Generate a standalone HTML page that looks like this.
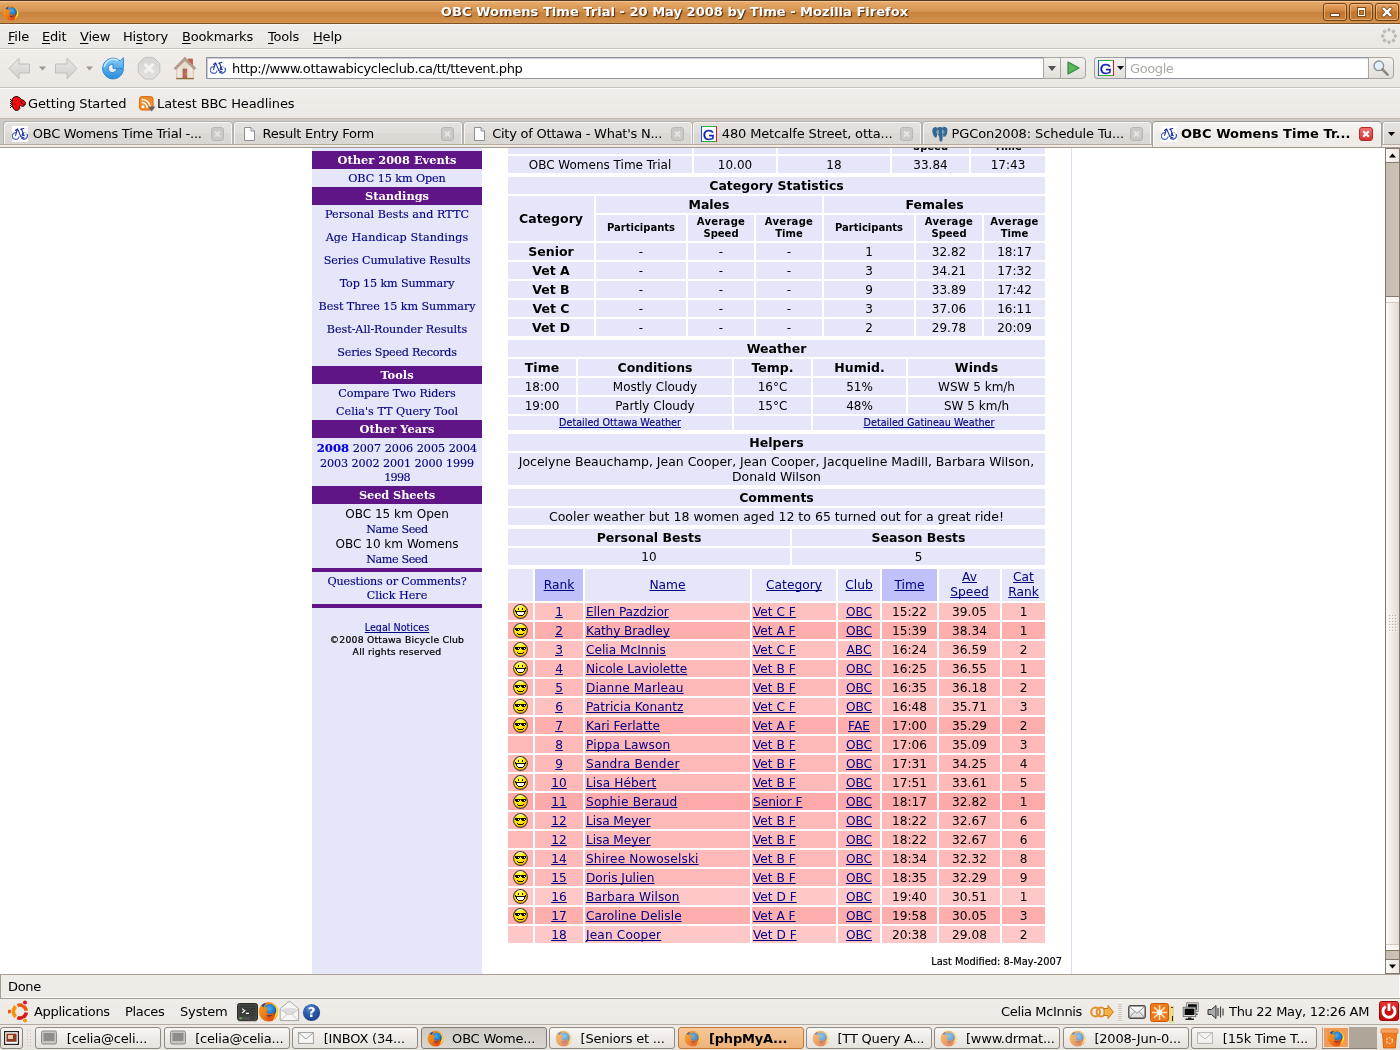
<!DOCTYPE html>
<html><head><meta charset="utf-8"><title>OBC Womens Time Trial - 20 May 2008 by Time - Mozilla Firefox</title>
<style>
*{box-sizing:border-box;margin:0;padding:0}
html,body{width:1400px;height:1050px;overflow:hidden;background:#efebe7;font-family:"DejaVu Sans","Liberation Sans",sans-serif;font-size:13px;color:#000}
.a{position:absolute;white-space:nowrap}
body>div{will-change:transform}
#titlebar{position:absolute;left:0;top:0;width:1400px;height:24px;background:linear-gradient(#4d3822 0,#4d3822 1px,#f6cc9c 1px,#f0bd88 2px,#e6aa6a 2px,#dc9c5a 7px,#d3924f 12px,#c8843e 12.5px,#cb8843 17px,#d4934f 23px,#7c5229 23px,#7c5229 24px)}
#titletext{position:absolute;left:0;top:3px;width:1349px;text-align:center;color:#fff;font-weight:bold;font-size:13.05px;line-height:17px;text-shadow:1px 1px 1px #4a280c;white-space:nowrap}
.wbtn{position:absolute;top:3px;width:24px;height:18px;border:1px solid #6e3f14;border-radius:3px;background:linear-gradient(#e9a566,#cf843d 45%,#c0742c 50%,#c97e38);box-shadow:inset 0 0 0 1px rgba(255,210,160,.55)}
#menubar{position:absolute;left:0;top:24px;width:1400px;height:25px;background:linear-gradient(#f0ede9,#ebe7e2);border-top:1px solid #f6f5f3;border-bottom:1px solid #c9c3bb}
#menubar span{position:absolute;top:4px;font-size:13px;letter-spacing:-.18px;line-height:16px;white-space:nowrap}
#menubar u{text-decoration:underline;text-underline-offset:2px;text-decoration-skip-ink:none}
#navbar{position:absolute;left:0;top:49px;width:1400px;height:39px;background:linear-gradient(#f1eeea,#ebe7e2);border-top:1px solid #fbfaf9;border-bottom:1px solid #c9c3bb}
#bmbar{position:absolute;left:0;top:88px;width:1400px;height:31px;background:linear-gradient(#f1eeea,#ece8e3);border-top:1px solid #fbfaf9;border-bottom:1px solid #c5b8a8}
#tabbar{position:absolute;left:0;top:119px;width:1400px;height:29px;background:#cdcac6;border-bottom:1px solid #a1978a}
.tab{position:absolute;top:2px;height:23px;border:1px solid #b5b1ac;border-bottom:none;border-radius:4px 4px 0 0;background:linear-gradient(#e5e2de 0,#e2dfdb 48%,#dcd8d4 52%,#dad6d2 100%);box-shadow:inset 1px 1px 0 #f6f5f3,inset -1px 0 0 #f6f5f3}
.tab .tt{position:absolute;left:27px;top:2px}
.tab .cl{position:absolute;right:8px;top:4px;width:14px;height:14px;border:1px solid #bdb8b0;border-radius:3px;background:#d6d2cc}
.tab.sel{top:2px;height:26px;background:linear-gradient(#f8f7f5,#efebe7 60%);border-color:#a5a19c;border-top-color:#9a9792;box-shadow:inset 1px 1px 0 #fdfdfc}
#content{position:absolute;left:0;top:148px;width:1385px;height:826px;background:#fff;overflow:hidden}
#vscroll{position:absolute;left:1385px;top:148px;width:15px;height:826px;background:#85796b}
#statusbar{position:absolute;left:0;top:974px;width:1400px;height:25px;background:#efebe7;border-top:1px solid #a89e92;border-left:1px solid #a89e92;border-bottom:1px solid #a59b8f;box-shadow:inset -1px -1px 0 #fbfaf9}
#panel{position:absolute;left:0;top:999px;width:1400px;height:26px;background:linear-gradient(#f0ede9,#ece8e3);border-bottom:1px solid #b5aca0}
#taskbar{position:absolute;left:0;top:1025px;width:1400px;height:25px;background:linear-gradient(#efebe7,#e6e2dc)}
/* page */
#side{position:absolute;left:312px;top:0;width:170px;height:828px;background:#e6e6fa;font-family:"DejaVu Serif","Liberation Serif",serif}
.sh{position:absolute;left:0;width:170px;height:18px;background:#5f1585;color:#fff;font-weight:bold;font-size:11.4px;line-height:18px;text-align:center;white-space:nowrap}
.sl{position:absolute;left:0;width:170px;height:18px;color:#000080;-webkit-text-stroke:.13px #000080;font-size:11.2px;line-height:18px;text-align:center;white-space:nowrap}
.ss{position:absolute;left:0;width:170px;font-family:"DejaVu Sans","Liberation Sans",sans-serif;text-align:center;white-space:nowrap}
.bar{position:absolute;left:0;width:170px;height:4px;background:#5f1585}
table.t{position:absolute;left:506px;width:541px;border-collapse:separate;border-spacing:2px;table-layout:fixed;font-size:12px}
table.t td,table.t th{background:#e6e6fa;text-align:center;vertical-align:middle;padding:0;line-height:15px;overflow:hidden;white-space:nowrap}
table.t td{padding-top:1px;line-height:16px}
table.t td.sm{padding:0;line-height:0}
table.t th{font-weight:bold;font-size:12.5px}
table.t th.h{font-weight:normal;font-size:12.25px;line-height:15px}
table.t td.w{font-size:12.45px;line-height:15px;padding-top:0;padding-bottom:1px}
table.t th.s{font-size:10px;line-height:12px}
a{color:#000080;text-decoration:underline;text-decoration-skip-ink:none}
table.r td{font-size:12.15px;height:17px}
table.r td.l{text-align:left;padding-left:1px}
</style></head><body>
<div id="titlebar"><svg class="a" style="left:3px;top:5px;opacity:1" width="16" height="16" viewBox="0 0 16 16"><circle cx="8" cy="8.2" r="7.4" fill="url(#ffo)"/><path d="M10.4 1.4Q15.6 3.6 15.4 9Q15 13 11 15Q13.2 12 13 8.4Q12.8 4.4 10.4 1.4Z" fill="url(#ffy)"/><circle cx="9" cy="7.2" r="4.9" fill="url(#ffb)"/><path d="M.8 6.4Q1.4 3.4 3.6 2.2Q3.4 3.6 4.2 4.8Q5.6 4.2 7.4 5.2L6.6 6.2L7.4 6.8Q6.2 7.6 6.6 8.8Q7.6 10.4 10.6 9.6Q12 9.2 12.4 8Q13 10.6 11 12.4Q8 14.4 4.6 13Q1 11 .8 6.4Z" fill="url(#ffo)"/><path d="M2.6 3.2Q4.4 1.6 6.4 1.6Q5 2.6 4.2 4.8Q3.2 4.2 2.6 3.2Z" fill="#1c4ea8"/><path d="M6.4 10.6Q8.6 11.6 11.2 10.2Q9.8 12 7.8 11.8Q6.8 11.4 6.4 10.6Z" fill="#0a2a78"/></svg><div id="titletext">OBC Womens Time Trial - 20 May 2008 by Time - Mozilla Firefox</div>
<div class="wbtn" style="left:1323px"><div class="a" style="left:7px;top:10px;width:8px;height:2px;background:#fff;box-shadow:0 0 0 1px #7a4a1c"></div></div>
<div class="wbtn" style="left:1349px"><div class="a" style="left:8px;top:4px;width:7px;height:8px;border:1px solid #fff;border-top-width:2px;box-shadow:0 0 0 1px #7a4a1c,inset 0 0 0 1px #9a5a20"></div></div>
<div class="wbtn" style="left:1375px"><svg class="a" style="left:5px;top:2px" width="12" height="12" viewBox="0 0 12 12"><path d="M2.6 2.6L9.4 9.4M9.4 2.6L2.6 9.4" stroke="#7a4a1c" stroke-width="4" stroke-linecap="round"/><path d="M2.6 2.6L9.4 9.4M9.4 2.6L2.6 9.4" stroke="#fff" stroke-width="2.3" stroke-linecap="round"/></svg></div>
</div>
<div id="menubar">
<span style="left:8px"><u>F</u>ile</span>
<span style="left:42px"><u>E</u>dit</span>
<span style="left:80px"><u>V</u>iew</span>
<span style="left:123px">Hi<u>s</u>tory</span>
<span style="left:182px"><u>B</u>ookmarks</span>
<span style="left:268px"><u>T</u>ools</span>
<span style="left:313px"><u>H</u>elp</span>
</div>
<svg width="0" height="0" style="position:absolute"><defs><linearGradient id="ffo" x1="0" y1="0" x2="1" y2="1"><stop offset="0" stop-color="#f6a21c"/><stop offset=".55" stop-color="#ee7a16"/><stop offset="1" stop-color="#d42a14"/></linearGradient><radialGradient id="ffb" cx="45%" cy="35%" r="65%"><stop offset="0" stop-color="#3fb2f2"/><stop offset=".6" stop-color="#2478d0"/><stop offset="1" stop-color="#123c8c"/></radialGradient><linearGradient id="ffy" x1="0" y1="0" x2="0" y2="1"><stop offset="0" stop-color="#ffc01c"/><stop offset=".5" stop-color="#ffe424"/><stop offset="1" stop-color="#f8a818"/></linearGradient></defs></svg>
<div id="navbar">
<svg class="a" style="left:8px;top:7px" width="23" height="23" viewBox="0 0 23 23"><defs><linearGradient id="ga" x1="0" y1="0" x2="0" y2="1"><stop offset="0" stop-color="#e9e7e4"/><stop offset="1" stop-color="#d2cfca"/></linearGradient></defs><path d="M1 11.5L11 1.2V7H21.5V16H11V21.8Z" fill="url(#ga)" stroke="#c2beb8" stroke-width="1" stroke-linejoin="round"/></svg>
<svg class="a" style="left:39px;top:16px" width="7" height="5" viewBox="0 0 7 5"><path d="M0 .5H7L3.5 4.5Z" fill="#9b9791"/></svg>
<svg class="a" style="left:54px;top:7px" width="24" height="23" viewBox="0 0 24 23"><path d="M23 11.5L13 1.2V7H1.5V16H13V21.8Z" fill="url(#ga)" stroke="#c2beb8" stroke-width="1" stroke-linejoin="round"/></svg>
<svg class="a" style="left:86px;top:16px" width="7" height="5" viewBox="0 0 7 5"><path d="M0 .5H7L3.5 4.5Z" fill="#9b9791"/></svg>
<svg class="a" style="left:101px;top:6px" width="24" height="24" viewBox="0 0 24 24"><defs><linearGradient id="gr" x1="0" y1="0" x2="0" y2="1"><stop offset="0" stop-color="#8fd0f5"/><stop offset=".35" stop-color="#62b6ee"/><stop offset="1" stop-color="#2b8bdb"/></linearGradient></defs><path d="M19.3 5.1A10.4 10.4 0 1 0 22.4 13.4L15.6 12.9A4.2 4.2 0 1 1 12 8.2L12 12.4H22.4V1.6Z" fill="url(#gr)" stroke="#3088d6" stroke-width="1" stroke-linejoin="round"/><path d="M3.4 10.4Q4.6 5.4 9.6 3.6Q13.4 2.6 16.4 4.2" fill="none" stroke="#d6eefc" stroke-width="1.5" stroke-linecap="round" opacity=".9"/></svg>
<svg class="a" style="left:137px;top:6px" width="24" height="24" viewBox="0 0 24 24"><defs><linearGradient id="gs" x1="0" y1="0" x2="0" y2="1"><stop offset="0" stop-color="#d6d4d0"/><stop offset="1" stop-color="#e3e1de"/></linearGradient></defs><path d="M7.6 1.4H16.4L22.8 7.8V16.6L16.4 23H7.6L1.2 16.6V7.8Z" fill="url(#gs)" stroke="#c5c2bd" stroke-width="1"/><path d="M7.6 7.8L16.4 16.6M16.4 7.8L7.6 16.6" stroke="#f3f2f0" stroke-width="3.2" stroke-linecap="butt"/></svg>
<svg class="a" style="left:173px;top:6px" width="24" height="24" viewBox="0 0 24 24"><defs><linearGradient id="gw" x1="0" y1="0" x2="1" y2="0"><stop offset="0" stop-color="#f3ebe3"/><stop offset=".5" stop-color="#e6d9cc"/><stop offset="1" stop-color="#f3ebe3"/></linearGradient></defs><rect x="15.6" y="3" width="4" height="7" fill="#c9634c" stroke="#a8503c" stroke-width=".6"/><path d="M3.8 10.5L12 3L20.2 10.5V22.4H3.8Z" fill="url(#gw)" stroke="#c7b3a0" stroke-width=".8"/><path d="M1.2 12.2L12 1.2L22.8 12.2L21.2 13.6L12 4.4L2.8 13.6Z" fill="#b89f8e" stroke="#9c8270" stroke-width=".7" stroke-linejoin="round"/><rect x="10" y="13" width="3.8" height="9.4" fill="#b96c5a" stroke="#9a5444" stroke-width=".6"/><circle cx="13.1" cy="18" r=".6" fill="#e6e020"/><path d="M3.2 22.6H20.8" stroke="#8a6a3a" stroke-width="1.3"/></svg>
<div class="a" style="left:206px;top:7px;width:838px;height:22px;background:#fff;border:1px solid #8e93a0;border-right:none;border-radius:1px 0 0 1px;box-shadow:inset 1px 1px 0 #c9ccd4"></div>
<svg class="a" style="left:210px;top:10px" width="16" height="16" viewBox="0 0 16 16"><path d="M3.4 6.6A3.4 3.4 0 1 0 7 10.8" fill="none" stroke="#4a66c0" stroke-width="1.1" stroke-linecap="round"/><path d="M9.6 12.2A3.5 3.5 0 0 0 15.4 9.2" fill="none" stroke="#2e4ab0" stroke-width="1.15" stroke-linecap="round"/><path d="M14.6 7.4A3.5 3.5 0 0 0 10.4 7" fill="none" stroke="#8aa0dc" stroke-width=".9"/><path d="M3.4 4.4L5.6 2.8M5.4 3L3.6 9.4M6 3.6L8.8 10.6L12 12M8.6 3.2L11.8 2.4M9.4 3L12.2 9.6L10 9.2L11 6.6" fill="none" stroke="#1428a4" stroke-width="1.05" stroke-linecap="round" stroke-linejoin="round"/><circle cx="15.2" cy="8.6" r=".7" fill="#0c1e9c"/></svg>
<div class="a" style="left:232px;top:11px;font-size:13px;letter-spacing:-.345px;line-height:16px">http://www.ottawabicycleclub.ca/tt/ttevent.php</div>
<div class="a" style="left:1043px;top:7px;width:18px;height:22px;background:linear-gradient(#f4f2ef,#e2dfda);border:1px solid #a9a59f"></div>
<svg class="a" style="left:1048px;top:16px" width="8" height="5" viewBox="0 0 8 5"><path d="M0 0H8L4 5Z" fill="#55524e"/></svg>
<div class="a" style="left:1060px;top:7px;width:26px;height:22px;background:linear-gradient(#f4f2ef,#e2dfda);border:1px solid #a9a59f;border-radius:0 4px 4px 0"></div>
<svg class="a" style="left:1067px;top:11px" width="13" height="14" viewBox="0 0 13 14"><path d="M1 1L12 7L1 13Z" fill="#5cb860" stroke="#2f8a3c" stroke-width="1.2" stroke-linejoin="round"/></svg>
<div class="a" style="left:1094px;top:7px;width:32px;height:22px;background:linear-gradient(#f4f2ef,#e2dfda);border:1px solid #9a9ca6;border-radius:3px 0 0 3px"></div>
<svg class="a" style="left:1098px;top:10px" width="16" height="16" viewBox="0 0 16 16"><rect x=".5" y=".5" width="15" height="15" fill="#fff"/><path d="M.5 0V16" stroke="#1a50e0"/><path d="M15.5 0V16" stroke="#e01a1a"/><path d="M1 .5H15M1 15.5H15" stroke="#2fae3a"/><text x="7.8" y="13.6" text-anchor="middle" font-family="Liberation Sans,DejaVu Sans,sans-serif" font-size="15.5" fill="#0c1eb0" stroke="#0c1eb0" stroke-width=".3">G</text></svg>
<svg class="a" style="left:1117px;top:16px" width="7" height="4" viewBox="0 0 7 4"><path d="M0 0H7L3.5 4Z" fill="#111"/></svg>
<div class="a" style="left:1125px;top:7px;width:244px;height:22px;background:#fff;border:1px solid #8e93a0;box-shadow:inset 0 1px 1px #d4d6dc"></div>
<div class="a" style="left:1130px;top:11px;font-size:13px;letter-spacing:-.4px;line-height:16px;color:#aaa9a6">Google</div>
<div class="a" style="left:1368px;top:7px;width:26px;height:22px;background:linear-gradient(#f4f2ef,#e2dfda);border:1px solid #a9a59f;border-radius:0 4px 4px 0"></div>
<svg class="a" style="left:1372px;top:9px" width="18" height="18" viewBox="0 0 18 18"><circle cx="6.8" cy="6.8" r="4.8" fill="#dff0fb" stroke="#8b9299" stroke-width="1.4"/><path d="M10.4 10.4L15.6 15.6" stroke="#8a8680" stroke-width="2.6" stroke-linecap="round"/></svg>
</div>
<svg class="a" style="left:1379px;top:26px" width="20" height="20" viewBox="0 0 20 20"><rect x="14.70" y="8.40" width="3.2" height="3.2" rx=".8" fill="#bcb9b5" transform="rotate(45 16.30 10.00)"/><rect x="12.85" y="12.85" width="3.2" height="3.2" rx=".8" fill="#bcb9b5" transform="rotate(45 14.45 14.45)"/><rect x="8.40" y="14.70" width="3.2" height="3.2" rx=".8" fill="#bcb9b5" transform="rotate(45 10.00 16.30)"/><rect x="3.95" y="12.85" width="3.2" height="3.2" rx=".8" fill="#bcb9b5" transform="rotate(45 5.55 14.45)"/><rect x="2.10" y="8.40" width="3.2" height="3.2" rx=".8" fill="#bcb9b5" transform="rotate(45 3.70 10.00)"/><rect x="3.95" y="3.95" width="3.2" height="3.2" rx=".8" fill="#bcb9b5" transform="rotate(45 5.55 5.55)"/><rect x="8.40" y="2.10" width="3.2" height="3.2" rx=".8" fill="#bcb9b5" transform="rotate(45 10.00 3.70)"/><rect x="12.85" y="3.95" width="3.2" height="3.2" rx=".8" fill="#bcb9b5" transform="rotate(45 14.45 5.55)"/></svg>
<div id="bmbar">
<svg class="a" style="left:9px;top:7px" width="17" height="15" viewBox="0 0 17 15"><path d="M3.2 3L5 1L8 .4L10.6 1.6L12.4 3.4L15 4.6L16.8 7L16.4 8.6L14.4 8.4L15.4 9.8L13.6 10.6L11.6 9.6L10.4 10.4L10.8 12.6L9 14.4L6 14.2L4 12L2.8 8Z" fill="#fa0a0a" stroke="#1a0808" stroke-width=".9" stroke-linejoin="round"/><g fill="#111" shape-rendering="crispEdges"><rect x="1" y="3" width="1" height="1"/><rect x="2" y="4" width="1" height="1"/><rect x="1" y="5" width="1" height="1"/><rect x="2" y="6" width="1" height="1"/><rect x="1" y="7" width="1" height="1"/><rect x="2" y="8" width="1" height="1"/><rect x="1" y="9" width="1" height="1"/><rect x="2" y="10" width="1" height="1"/><rect x="1" y="11" width="1" height="1"/></g><path d="M11 5.2L12.8 5.8L12 7L13.6 7.4M7 4L8 5M5.6 7.6L6.8 8.4M6.2 10.6L7.4 11.4M8.6 2.6L9.4 3.4" stroke="#300" stroke-width=".9" fill="none"/></svg>
<div class="a" style="left:28px;top:7px;font-size:13px;letter-spacing:-.15px;line-height:16px">Getting Started</div>
<svg class="a" style="left:139px;top:7px" width="17" height="16" viewBox="0 0 17 16"><rect x=".6" y=".6" width="13.4" height="13.4" rx="2.4" fill="#f08a28" stroke="#d86a10" stroke-width="1"/><circle cx="4" cy="10.8" r="1.5" fill="#fff"/><path d="M2.6 6.6A5 5 0 0 1 8 12M2.6 3.4A8.2 8.2 0 0 1 11.2 12" fill="none" stroke="#fff" stroke-width="1.5"/><path d="M9 10.5H16.4L12.7 15.4Z" fill="#66625e"/></svg>
<div class="a" style="left:157px;top:7px;font-size:13px;letter-spacing:-.09px;line-height:16px">Latest BBC Headlines</div>
</div>
<div id="tabbar">
<div class="a" style="left:0;top:25px;width:1400px;height:1px;background:#b9ab9b"></div>
<div class="a" style="left:0;top:26px;width:1400px;height:2px;background:#f0ece8"></div>
<div class="tab" style="left:3px;width:230px"></div>
<svg class="a" style="left:12px;top:7px" width="16" height="16" viewBox="0 0 16 16"><rect width="16" height="16" fill="#fff"/><path d="M3.4 6.6A3.4 3.4 0 1 0 7 10.8" fill="none" stroke="#4a66c0" stroke-width="1.1" stroke-linecap="round"/><path d="M9.6 12.2A3.5 3.5 0 0 0 15.4 9.2" fill="none" stroke="#2e4ab0" stroke-width="1.15" stroke-linecap="round"/><path d="M14.6 7.4A3.5 3.5 0 0 0 10.4 7" fill="none" stroke="#8aa0dc" stroke-width=".9"/><path d="M3.4 4.4L5.6 2.8M5.4 3L3.6 9.4M6 3.6L8.8 10.6L12 12M8.6 3.2L11.8 2.4M9.4 3L12.2 9.6L10 9.2L11 6.6" fill="none" stroke="#1428a4" stroke-width="1.05" stroke-linecap="round" stroke-linejoin="round"/><circle cx="15.2" cy="8.6" r=".7" fill="#0c1e9c"/></svg>
<div class="a" style="left:32.8px;top:7px;font-size:13px;letter-spacing:-0.265px;line-height:16px">OBC Womens Time Trial -...</div>
<div class="a" style="left:211px;top:8px;width:13px;height:14px;border:1px solid #bab7b2;border-radius:3px;background:#cbc9c5"></div>
<svg class="a" style="left:214px;top:11px" width="7" height="8" viewBox="0 0 7 8"><path d="M1 1.5L6 6.5M6 1.5L1 6.5" stroke="#e6e4e1" stroke-width="2"/></svg>
<div class="tab" style="left:233px;width:230px"></div>
<svg class="a" style="left:241px;top:7px" width="16" height="16" viewBox="0 0 16 16"><path d="M3.5 1.5H10L13.5 5V14.5H3.5Z" fill="#fdfdfd" stroke="#8a8f99" stroke-width="1"/><path d="M10 1.5V5H13.5" fill="#e4e6ea" stroke="#8a8f99" stroke-width="1"/></svg>
<div class="a" style="left:262.5px;top:7px;font-size:13px;letter-spacing:-0.255px;line-height:16px">Result Entry Form</div>
<div class="a" style="left:441px;top:8px;width:13px;height:14px;border:1px solid #bab7b2;border-radius:3px;background:#cbc9c5"></div>
<svg class="a" style="left:444px;top:11px" width="7" height="8" viewBox="0 0 7 8"><path d="M1 1.5L6 6.5M6 1.5L1 6.5" stroke="#e6e4e1" stroke-width="2"/></svg>
<div class="tab" style="left:463px;width:230px"></div>
<svg class="a" style="left:471px;top:7px" width="16" height="16" viewBox="0 0 16 16"><path d="M3.5 1.5H10L13.5 5V14.5H3.5Z" fill="#fdfdfd" stroke="#8a8f99" stroke-width="1"/><path d="M10 1.5V5H13.5" fill="#e4e6ea" stroke="#8a8f99" stroke-width="1"/></svg>
<div class="a" style="left:492.2px;top:7px;font-size:13px;letter-spacing:-0.255px;line-height:16px">City of Ottawa - What&#39;s N...</div>
<div class="a" style="left:671px;top:8px;width:13px;height:14px;border:1px solid #bab7b2;border-radius:3px;background:#cbc9c5"></div>
<svg class="a" style="left:674px;top:11px" width="7" height="8" viewBox="0 0 7 8"><path d="M1 1.5L6 6.5M6 1.5L1 6.5" stroke="#e6e4e1" stroke-width="2"/></svg>
<div class="tab" style="left:692px;width:230px"></div>
<svg class="a" style="left:701px;top:7px" width="16" height="16" viewBox="0 0 16 16"><rect x=".5" y=".5" width="15" height="15" fill="#fff"/><path d="M.5 0V16" stroke="#1a50e0"/><path d="M15.5 0V16" stroke="#e01a1a"/><path d="M1 .5H15M1 15.5H15" stroke="#2fae3a"/><text x="7.8" y="13.6" text-anchor="middle" font-family="Liberation Sans,DejaVu Sans,sans-serif" font-size="15.5" fill="#0c1eb0" stroke="#0c1eb0" stroke-width=".3">G</text></svg>
<div class="a" style="left:721.8px;top:7px;font-size:13px;letter-spacing:-0.15px;line-height:16px">480 Metcalfe Street, otta...</div>
<div class="a" style="left:900px;top:8px;width:13px;height:14px;border:1px solid #bab7b2;border-radius:3px;background:#cbc9c5"></div>
<svg class="a" style="left:903px;top:11px" width="7" height="8" viewBox="0 0 7 8"><path d="M1 1.5L6 6.5M6 1.5L1 6.5" stroke="#e6e4e1" stroke-width="2"/></svg>
<div class="tab" style="left:922px;width:230px"></div>
<svg class="a" style="left:932px;top:7px" width="16" height="16" viewBox="0 0 16 16"><path d="M2.4 1.2Q-.2 2 .4 6Q1 10 3.2 11.8Q5.2 11.4 5.2 8L5.4 2.2Q4.2 .6 2.4 1.2Z" fill="#336791"/><path d="M5.4 1.6Q8 .2 10.8 1.6L10.8 7Q10.4 10 10.6 13Q10.6 15.8 8.8 15.8Q7.2 15.6 7.4 12Q7.4 9.4 5.8 8.4Q5 5 5.4 1.6Z" fill="#336791"/><path d="M10.8 1Q14 .2 15.4 3Q16 6.4 13.6 10.4Q12.4 11.6 11.2 10.4L10.8 2Z" fill="#336791"/><path d="M5.6 4.2Q4.6 4.4 4.8 7.4M6.6 4.4V8M11.2 4.2Q12.2 4.6 11.8 7.2M10.4 4.4L10.6 7.6M5.6 10.6L6.8 11M12 10.6L13.2 10.2M10.6 .4L11.4 1.4" stroke="#a6cbe6" stroke-width=".7" fill="none"/></svg>
<div class="a" style="left:951.5px;top:7px;font-size:13px;letter-spacing:-0.11px;line-height:16px">PGCon2008: Schedule Tu...</div>
<div class="a" style="left:1130px;top:8px;width:13px;height:14px;border:1px solid #bab7b2;border-radius:3px;background:#cbc9c5"></div>
<svg class="a" style="left:1133px;top:11px" width="7" height="8" viewBox="0 0 7 8"><path d="M1 1.5L6 6.5M6 1.5L1 6.5" stroke="#e6e4e1" stroke-width="2"/></svg>
<div class="tab sel" style="left:1152px;width:230px"></div>
<svg class="a" style="left:1161px;top:7px" width="16" height="16" viewBox="0 0 16 16"><rect width="16" height="16" fill="#fff"/><path d="M3.4 6.6A3.4 3.4 0 1 0 7 10.8" fill="none" stroke="#4a66c0" stroke-width="1.1" stroke-linecap="round"/><path d="M9.6 12.2A3.5 3.5 0 0 0 15.4 9.2" fill="none" stroke="#2e4ab0" stroke-width="1.15" stroke-linecap="round"/><path d="M14.6 7.4A3.5 3.5 0 0 0 10.4 7" fill="none" stroke="#8aa0dc" stroke-width=".9"/><path d="M3.4 4.4L5.6 2.8M5.4 3L3.6 9.4M6 3.6L8.8 10.6L12 12M8.6 3.2L11.8 2.4M9.4 3L12.2 9.6L10 9.2L11 6.6" fill="none" stroke="#1428a4" stroke-width="1.05" stroke-linecap="round" stroke-linejoin="round"/><circle cx="15.2" cy="8.6" r=".7" fill="#0c1e9c"/></svg>
<div class="a" style="left:1181px;top:7px;font-size:13px;letter-spacing:.03px;line-height:16px;font-weight:bold">OBC Womens Time Tr...</div>
<div class="a" style="left:1359px;top:8px;width:14px;height:14px;border:1px solid #b02a2a;border-radius:3px;background:linear-gradient(#f07070,#d83030)"></div>
<svg class="a" style="left:1362px;top:11px" width="8" height="8" viewBox="0 0 8 8"><path d="M1.2 1.2L6.8 6.8M6.8 1.2L1.2 6.8" stroke="#fff" stroke-width="2.2"/></svg>
<div class="a" style="left:1382px;top:2px;width:19px;height:23px;border:1px solid #b5b1ac;border-bottom:none;border-radius:3px 0 0 0;background:linear-gradient(#e5e2de 0,#e2dfdb 48%,#dcd8d4 52%,#dad6d2 100%);box-shadow:inset 1px 1px 0 #f6f5f3"></div>
<svg class="a" style="left:1388px;top:13px" width="7" height="4" viewBox="0 0 7 4"><path d="M0 0H7L3.5 4Z" fill="#000"/></svg>
</div>
<div id="content">
<div id="side">
<div class="sh" style="top:3px;">Other 2008 Events</div>
<div class="sl" style="top:22px;letter-spacing:-.08px">OBC 15 km Open</div>
<div class="sh" style="top:39px;">Standings</div>
<div class="sl" style="top:58px;letter-spacing:0.03px">Personal Bests and RTTC</div>
<div class="sl" style="top:81px;letter-spacing:0.11px">Age Handicap Standings</div>
<div class="sl" style="top:104px;letter-spacing:-0.11px">Series Cumulative Results</div>
<div class="sl" style="top:127px;letter-spacing:-0.15px">Top 15 km Summary</div>
<div class="sl" style="top:150px;letter-spacing:-0.07px">Best Three 15 km Summary</div>
<div class="sl" style="top:173px;letter-spacing:-0.07px">Best-All-Rounder Results</div>
<div class="sl" style="top:196px;letter-spacing:-0.245px">Series Speed Records</div>
<div class="sh" style="top:218px;">Tools</div>
<div class="sl" style="top:237px;letter-spacing:-.09px">Compare Two Riders</div>
<div class="sl" style="top:255px;">Celia&#39;s TT Query Tool</div>
<div class="sh" style="top:272px;">Other Years</div>
<div class="sl" style="top:293px;height:15px;line-height:15px"><b style="color:#0000ee;font-size:11.6px">2008</b> 2007 2006 2005 2004</div>
<div class="sl" style="top:308px;height:15px;line-height:15px;letter-spacing:-.1px">2003 2002 2001 2000 1999</div>
<div class="sl" style="top:322px;height:15px;line-height:15px;letter-spacing:-.7px">1998</div>
<div class="sh" style="top:338px;letter-spacing:-.1px">Seed Sheets</div>
<div class="ss" style="top:358px;font-size:12.05px;line-height:16px">OBC 15 km Open</div>
<div class="sl" style="top:373px;letter-spacing:-.4px">Name Seed</div>
<div class="ss" style="top:388px;font-size:12.05px;line-height:16px">OBC 10 km Womens</div>
<div class="sl" style="top:403px;letter-spacing:-.4px">Name Seed</div>
<div class="bar" style="top:420px"></div>
<div class="sl" style="top:425px;letter-spacing:-.145px">Questions or Comments?</div>
<div class="sl" style="top:439px;">Click Here</div>
<div class="bar" style="top:456px"></div>
<div class="ss" style="top:474px;font-size:9.6px;line-height:12px;-webkit-text-stroke:.12px #000080"><a>Legal Notices</a></div>
<div class="ss" style="top:486px;font-size:9.3px;line-height:12px;letter-spacing:.2px;-webkit-text-stroke:.22px #000">©2008 Ottawa Bicycle Club</div>
<div class="ss" style="top:498px;font-size:9.3px;line-height:12px;letter-spacing:.2px;-webkit-text-stroke:.22px #000">All rights reserved</div>
</div>
<div class="a" style="left:1071px;top:0;width:1px;height:828px;background:#dcdcf5"></div>
<table class="t" style="top:-22px"><colgroup><col style="width:184px"><col style="width:82px"><col style="width:112px"><col style="width:77px"><col style="width:74px"></colgroup>
<tr style="height:26px"><th class="s">Event</th><th class="s">Distance</th><th class="s">Participants</th><th class="s"><span style="letter-spacing:.3px">Average</span><br>Speed</th><th class="s"><span style="letter-spacing:.3px">Average</span><br>Time</th></tr>
<tr style="height:17px"><td>OBC Womens Time Trial</td><td>10.00</td><td>18</td><td>33.84</td><td>17:43</td></tr>
</table>
<table class="t" style="top:27px"><colgroup><col style="width:86px"><col style="width:90px"><col style="width:66px"><col style="width:66px"><col style="width:90px"><col style="width:66px"><col style="width:61px"></colgroup>
<tr style="height:17px"><th colspan="7">Category Statistics</th></tr>
<tr style="height:17px"><th rowspan="2">Category</th><th colspan="3">Males</th><th colspan="3">Females</th></tr>
<tr style="height:26px"><th class="s">Participants</th><th class="s"><span style="letter-spacing:.3px">Average</span><br>Speed</th><th class="s"><span style="letter-spacing:.3px">Average</span><br>Time</th><th class="s">Participants</th><th class="s"><span style="letter-spacing:.3px">Average</span><br>Speed</th><th class="s"><span style="letter-spacing:.3px">Average</span><br>Time</th></tr>
<tr style="height:17px"><th>Senior</th><td>-</td><td>-</td><td>-</td><td>1</td><td>32.82</td><td>18:17</td></tr>
<tr style="height:17px"><th>Vet A</th><td>-</td><td>-</td><td>-</td><td>3</td><td>34.21</td><td>17:32</td></tr>
<tr style="height:17px"><th>Vet B</th><td>-</td><td>-</td><td>-</td><td>9</td><td>33.89</td><td>17:42</td></tr>
<tr style="height:17px"><th>Vet C</th><td>-</td><td>-</td><td>-</td><td>3</td><td>37.06</td><td>16:11</td></tr>
<tr style="height:17px"><th>Vet D</th><td>-</td><td>-</td><td>-</td><td>2</td><td>29.78</td><td>20:09</td></tr>
</table>
<table class="t" style="top:190px"><colgroup><col style="width:68px"><col style="width:154px"><col style="width:77px"><col style="width:93px"><col style="width:137px"></colgroup>
<tr style="height:17px"><th colspan="5">Weather</th></tr>
<tr style="height:17px"><th>Time</th><th>Conditions</th><th>Temp.</th><th>Humid.</th><th>Winds</th></tr>
<tr style="height:17px"><td>18:00</td><td>Mostly Cloudy</td><td>16°C</td><td>51%</td><td>WSW 5 km/h</td></tr>
<tr style="height:17px"><td>19:00</td><td>Partly Cloudy</td><td>15°C</td><td>48%</td><td>SW 5 km/h</td></tr>
<tr style="height:14px"><td colspan="2" style="font-size:9.65px;line-height:12px;padding-top:1px;vertical-align:top;-webkit-text-stroke:.13px #000080"><a>Detailed Ottawa Weather</a></td><td></td><td colspan="2" style="font-size:9.65px;line-height:12px;padding-top:1px;vertical-align:top;-webkit-text-stroke:.13px #000080"><a>Detailed Gatineau Weather</a></td></tr>
</table>
<table class="t" style="top:284px"><colgroup><col style="width:537px"></colgroup>
<tr style="height:17px"><th>Helpers</th></tr>
<tr style="height:32px"><td class="w">Jocelyne Beauchamp, Jean Cooper, Jean Cooper, Jacqueline Madill, Barbara Wilson,<br>Donald Wilson</td></tr>
</table>
<table class="t" style="top:339px"><colgroup><col style="width:537px"></colgroup>
<tr style="height:17px"><th>Comments</th></tr>
<tr style="height:17px"><td class="w" style="font-size:12.54px">Cooler weather but 18 women aged 12 to 65 turned out for a great ride!</td></tr>
</table>
<table class="t" style="top:379px"><colgroup><col style="width:282px"><col style="width:253px"></colgroup>
<tr style="height:17px"><th>Personal Bests</th><th>Season Bests</th></tr>
<tr style="height:17px"><td>10</td><td>5</td></tr>
</table>
<svg width="0" height="0" style="position:absolute"><defs><radialGradient id="sg" cx="38%" cy="30%" r="75%"><stop offset="0" stop-color="#ffff50"/><stop offset=".5" stop-color="#ffe800"/><stop offset=".8" stop-color="#ffc400"/><stop offset="1" stop-color="#f09800"/></radialGradient></defs></svg>
<table class="t r" style="top:419px"><colgroup><col style="width:25px"><col style="width:48px"><col style="width:165px"><col style="width:84px"><col style="width:42px"><col style="width:55px"><col style="width:61px"><col style="width:43px"></colgroup>
<tr style="height:32px"><th></th><th class="h" style="background:#c0c0fb"><a>Rank</a></th><th class="h"><a>Name</a></th><th class="h"><a>Category</a></th><th class="h"><a>Club</a></th><th class="h" style="background:#c0c0fb"><a>Time</a></th><th class="h"><a>Av<br>Speed</a></th><th class="h"><a>Cat<br>Rank</a></th></tr>
<tr style="height:17px"><td class="sm" style="background:#ffc0c0"><svg width="15" height="15" viewBox="0 0 15 15" style="display:block;margin:0 auto 0 5px"><circle cx="7.5" cy="7.5" r="6.9" fill="url(#sg)" stroke="#45433a" stroke-width="1.1"/><path d="M4.2 2.4Q7 .9 10 2.2" stroke="#fffde0" stroke-width="1" fill="none" opacity=".9"/><g shape-rendering="crispEdges"><rect x="5" y="4" width="1" height="2" fill="#0c0c0c"/><rect x="9" y="4" width="1" height="2" fill="#0c0c0c"/><rect x="2" y="6" width="1" height="1" fill="#0c0c0c"/><rect x="12" y="6" width="1" height="1" fill="#0c0c0c"/><rect x="2" y="7" width="11" height="1" fill="#0c0c0c"/><rect x="3" y="8" width="1" height="1" fill="#0c0c0c"/><rect x="11" y="8" width="1" height="1" fill="#0c0c0c"/><rect x="4" y="8" width="7" height="1" fill="#fff"/><rect x="3" y="9" width="1" height="1" fill="#0c0c0c"/><rect x="11" y="9" width="1" height="1" fill="#0c0c0c"/><rect x="4" y="9" width="7" height="1" fill="#fff"/><rect x="4" y="10" width="1" height="1" fill="#0c0c0c"/><rect x="10" y="10" width="1" height="1" fill="#0c0c0c"/><rect x="5" y="10" width="5" height="1" fill="#fff"/><rect x="5" y="11" width="5" height="1" fill="#0c0c0c"/></g></svg></td><td style="background:#ffc0c0"><a>1</a></td><td class="l" style="background:#ffc0c0"><a style="letter-spacing:-0.09px">Ellen Pazdzior</a></td><td class="l" style="background:#ffc0c0"><a>Vet C F</a></td><td style="background:#ffc0c0"><a>OBC</a></td><td style="background:#ffc0c0">15:22</td><td style="background:#ffc0c0">39.05</td><td style="background:#ffc0c0">1</td></tr>
<tr style="height:17px"><td class="sm" style="background:#ffaeae"><svg width="15" height="15" viewBox="0 0 15 15" style="display:block;margin:0 auto 0 5px"><circle cx="7.5" cy="7.5" r="6.9" fill="url(#sg)" stroke="#45433a" stroke-width="1.1"/><path d="M4.2 2.4Q7 .9 10 2.2" stroke="#fffde0" stroke-width="1" fill="none" opacity=".9"/><g shape-rendering="crispEdges"><rect x="2" y="5" width="5" height="1" fill="#0c0c0c"/><rect x="8" y="5" width="5" height="1" fill="#0c0c0c"/><rect x="7" y="5" width="1" height="1" fill="#4a4000"/><rect x="2" y="6" width="5" height="1" fill="#0c0c0c"/><rect x="8" y="6" width="5" height="1" fill="#0c0c0c"/><rect x="5" y="6" width="1" height="1" fill="#fff"/><rect x="11" y="6" width="1" height="1" fill="#fff"/><rect x="3" y="7" width="3" height="1" fill="#0c0c0c"/><rect x="9" y="7" width="3" height="1" fill="#0c0c0c"/><rect x="4" y="10" width="1" height="1" fill="#0c0c0c"/><rect x="10" y="10" width="1" height="1" fill="#0c0c0c"/><rect x="5" y="11" width="5" height="1" fill="#0c0c0c"/></g></svg></td><td style="background:#ffaeae"><a>2</a></td><td class="l" style="background:#ffaeae"><a style="letter-spacing:-0.11px">Kathy Bradley</a></td><td class="l" style="background:#ffaeae"><a>Vet A F</a></td><td style="background:#ffaeae"><a>OBC</a></td><td style="background:#ffaeae">15:39</td><td style="background:#ffaeae">38.34</td><td style="background:#ffaeae">1</td></tr>
<tr style="height:17px"><td class="sm" style="background:#ffc0c0"><svg width="15" height="15" viewBox="0 0 15 15" style="display:block;margin:0 auto 0 5px"><circle cx="7.5" cy="7.5" r="6.9" fill="url(#sg)" stroke="#45433a" stroke-width="1.1"/><path d="M4.2 2.4Q7 .9 10 2.2" stroke="#fffde0" stroke-width="1" fill="none" opacity=".9"/><g shape-rendering="crispEdges"><rect x="2" y="5" width="5" height="1" fill="#0c0c0c"/><rect x="8" y="5" width="5" height="1" fill="#0c0c0c"/><rect x="7" y="5" width="1" height="1" fill="#4a4000"/><rect x="2" y="6" width="5" height="1" fill="#0c0c0c"/><rect x="8" y="6" width="5" height="1" fill="#0c0c0c"/><rect x="5" y="6" width="1" height="1" fill="#fff"/><rect x="11" y="6" width="1" height="1" fill="#fff"/><rect x="3" y="7" width="3" height="1" fill="#0c0c0c"/><rect x="9" y="7" width="3" height="1" fill="#0c0c0c"/><rect x="4" y="10" width="1" height="1" fill="#0c0c0c"/><rect x="10" y="10" width="1" height="1" fill="#0c0c0c"/><rect x="5" y="11" width="5" height="1" fill="#0c0c0c"/></g></svg></td><td style="background:#ffc0c0"><a>3</a></td><td class="l" style="background:#ffc0c0"><a style="letter-spacing:0px">Celia McInnis</a></td><td class="l" style="background:#ffc0c0"><a>Vet C F</a></td><td style="background:#ffc0c0"><a>ABC</a></td><td style="background:#ffc0c0">16:24</td><td style="background:#ffc0c0">36.59</td><td style="background:#ffc0c0">2</td></tr>
<tr style="height:17px"><td class="sm" style="background:#ffb9b9"><svg width="15" height="15" viewBox="0 0 15 15" style="display:block;margin:0 auto 0 5px"><circle cx="7.5" cy="7.5" r="6.9" fill="url(#sg)" stroke="#45433a" stroke-width="1.1"/><path d="M4.2 2.4Q7 .9 10 2.2" stroke="#fffde0" stroke-width="1" fill="none" opacity=".9"/><g shape-rendering="crispEdges"><rect x="5" y="4" width="1" height="2" fill="#0c0c0c"/><rect x="9" y="4" width="1" height="2" fill="#0c0c0c"/><rect x="2" y="6" width="1" height="1" fill="#0c0c0c"/><rect x="12" y="6" width="1" height="1" fill="#0c0c0c"/><rect x="2" y="7" width="11" height="1" fill="#0c0c0c"/><rect x="3" y="8" width="1" height="1" fill="#0c0c0c"/><rect x="11" y="8" width="1" height="1" fill="#0c0c0c"/><rect x="4" y="8" width="7" height="1" fill="#fff"/><rect x="3" y="9" width="1" height="1" fill="#0c0c0c"/><rect x="11" y="9" width="1" height="1" fill="#0c0c0c"/><rect x="4" y="9" width="7" height="1" fill="#fff"/><rect x="4" y="10" width="1" height="1" fill="#0c0c0c"/><rect x="10" y="10" width="1" height="1" fill="#0c0c0c"/><rect x="5" y="10" width="5" height="1" fill="#fff"/><rect x="5" y="11" width="5" height="1" fill="#0c0c0c"/></g></svg></td><td style="background:#ffb9b9"><a>4</a></td><td class="l" style="background:#ffb9b9"><a style="letter-spacing:0px">Nicole Laviolette</a></td><td class="l" style="background:#ffb9b9"><a>Vet B F</a></td><td style="background:#ffb9b9"><a>OBC</a></td><td style="background:#ffb9b9">16:25</td><td style="background:#ffb9b9">36.55</td><td style="background:#ffb9b9">1</td></tr>
<tr style="height:17px"><td class="sm" style="background:#ffb9b9"><svg width="15" height="15" viewBox="0 0 15 15" style="display:block;margin:0 auto 0 5px"><circle cx="7.5" cy="7.5" r="6.9" fill="url(#sg)" stroke="#45433a" stroke-width="1.1"/><path d="M4.2 2.4Q7 .9 10 2.2" stroke="#fffde0" stroke-width="1" fill="none" opacity=".9"/><g shape-rendering="crispEdges"><rect x="2" y="5" width="5" height="1" fill="#0c0c0c"/><rect x="8" y="5" width="5" height="1" fill="#0c0c0c"/><rect x="7" y="5" width="1" height="1" fill="#4a4000"/><rect x="2" y="6" width="5" height="1" fill="#0c0c0c"/><rect x="8" y="6" width="5" height="1" fill="#0c0c0c"/><rect x="5" y="6" width="1" height="1" fill="#fff"/><rect x="11" y="6" width="1" height="1" fill="#fff"/><rect x="3" y="7" width="3" height="1" fill="#0c0c0c"/><rect x="9" y="7" width="3" height="1" fill="#0c0c0c"/><rect x="4" y="10" width="1" height="1" fill="#0c0c0c"/><rect x="10" y="10" width="1" height="1" fill="#0c0c0c"/><rect x="5" y="11" width="5" height="1" fill="#0c0c0c"/></g></svg></td><td style="background:#ffb9b9"><a>5</a></td><td class="l" style="background:#ffb9b9"><a style="letter-spacing:0.13px">Dianne Marleau</a></td><td class="l" style="background:#ffb9b9"><a>Vet B F</a></td><td style="background:#ffb9b9"><a>OBC</a></td><td style="background:#ffb9b9">16:35</td><td style="background:#ffb9b9">36.18</td><td style="background:#ffb9b9">2</td></tr>
<tr style="height:17px"><td class="sm" style="background:#ffc0c0"><svg width="15" height="15" viewBox="0 0 15 15" style="display:block;margin:0 auto 0 5px"><circle cx="7.5" cy="7.5" r="6.9" fill="url(#sg)" stroke="#45433a" stroke-width="1.1"/><path d="M4.2 2.4Q7 .9 10 2.2" stroke="#fffde0" stroke-width="1" fill="none" opacity=".9"/><g shape-rendering="crispEdges"><rect x="2" y="5" width="5" height="1" fill="#0c0c0c"/><rect x="8" y="5" width="5" height="1" fill="#0c0c0c"/><rect x="7" y="5" width="1" height="1" fill="#4a4000"/><rect x="2" y="6" width="5" height="1" fill="#0c0c0c"/><rect x="8" y="6" width="5" height="1" fill="#0c0c0c"/><rect x="5" y="6" width="1" height="1" fill="#fff"/><rect x="11" y="6" width="1" height="1" fill="#fff"/><rect x="3" y="7" width="3" height="1" fill="#0c0c0c"/><rect x="9" y="7" width="3" height="1" fill="#0c0c0c"/><rect x="4" y="10" width="1" height="1" fill="#0c0c0c"/><rect x="10" y="10" width="1" height="1" fill="#0c0c0c"/><rect x="5" y="11" width="5" height="1" fill="#0c0c0c"/></g></svg></td><td style="background:#ffc0c0"><a>6</a></td><td class="l" style="background:#ffc0c0"><a style="letter-spacing:0px">Patricia Konantz</a></td><td class="l" style="background:#ffc0c0"><a>Vet C F</a></td><td style="background:#ffc0c0"><a>OBC</a></td><td style="background:#ffc0c0">16:48</td><td style="background:#ffc0c0">35.71</td><td style="background:#ffc0c0">3</td></tr>
<tr style="height:17px"><td class="sm" style="background:#ffaeae"><svg width="15" height="15" viewBox="0 0 15 15" style="display:block;margin:0 auto 0 5px"><circle cx="7.5" cy="7.5" r="6.9" fill="url(#sg)" stroke="#45433a" stroke-width="1.1"/><path d="M4.2 2.4Q7 .9 10 2.2" stroke="#fffde0" stroke-width="1" fill="none" opacity=".9"/><g shape-rendering="crispEdges"><rect x="2" y="5" width="5" height="1" fill="#0c0c0c"/><rect x="8" y="5" width="5" height="1" fill="#0c0c0c"/><rect x="7" y="5" width="1" height="1" fill="#4a4000"/><rect x="2" y="6" width="5" height="1" fill="#0c0c0c"/><rect x="8" y="6" width="5" height="1" fill="#0c0c0c"/><rect x="5" y="6" width="1" height="1" fill="#fff"/><rect x="11" y="6" width="1" height="1" fill="#fff"/><rect x="3" y="7" width="3" height="1" fill="#0c0c0c"/><rect x="9" y="7" width="3" height="1" fill="#0c0c0c"/><rect x="4" y="10" width="1" height="1" fill="#0c0c0c"/><rect x="10" y="10" width="1" height="1" fill="#0c0c0c"/><rect x="5" y="11" width="5" height="1" fill="#0c0c0c"/></g></svg></td><td style="background:#ffaeae"><a>7</a></td><td class="l" style="background:#ffaeae"><a style="letter-spacing:0px">Kari Ferlatte</a></td><td class="l" style="background:#ffaeae"><a>Vet A F</a></td><td style="background:#ffaeae"><a>FAE</a></td><td style="background:#ffaeae">17:00</td><td style="background:#ffaeae">35.29</td><td style="background:#ffaeae">2</td></tr>
<tr style="height:17px"><td class="sm" style="background:#ffb9b9"></td><td style="background:#ffb9b9"><a>8</a></td><td class="l" style="background:#ffb9b9"><a style="letter-spacing:0.14px">Pippa Lawson</a></td><td class="l" style="background:#ffb9b9"><a>Vet B F</a></td><td style="background:#ffb9b9"><a>OBC</a></td><td style="background:#ffb9b9">17:06</td><td style="background:#ffb9b9">35.09</td><td style="background:#ffb9b9">3</td></tr>
<tr style="height:17px"><td class="sm" style="background:#ffb9b9"><svg width="15" height="15" viewBox="0 0 15 15" style="display:block;margin:0 auto 0 5px"><circle cx="7.5" cy="7.5" r="6.9" fill="url(#sg)" stroke="#45433a" stroke-width="1.1"/><path d="M4.2 2.4Q7 .9 10 2.2" stroke="#fffde0" stroke-width="1" fill="none" opacity=".9"/><g shape-rendering="crispEdges"><rect x="5" y="4" width="1" height="2" fill="#0c0c0c"/><rect x="9" y="4" width="1" height="2" fill="#0c0c0c"/><rect x="2" y="6" width="1" height="1" fill="#0c0c0c"/><rect x="12" y="6" width="1" height="1" fill="#0c0c0c"/><rect x="2" y="7" width="11" height="1" fill="#0c0c0c"/><rect x="3" y="8" width="1" height="1" fill="#0c0c0c"/><rect x="11" y="8" width="1" height="1" fill="#0c0c0c"/><rect x="4" y="8" width="7" height="1" fill="#fff"/><rect x="3" y="9" width="1" height="1" fill="#0c0c0c"/><rect x="11" y="9" width="1" height="1" fill="#0c0c0c"/><rect x="4" y="9" width="7" height="1" fill="#fff"/><rect x="4" y="10" width="1" height="1" fill="#0c0c0c"/><rect x="10" y="10" width="1" height="1" fill="#0c0c0c"/><rect x="5" y="10" width="5" height="1" fill="#fff"/><rect x="5" y="11" width="5" height="1" fill="#0c0c0c"/></g></svg></td><td style="background:#ffb9b9"><a>9</a></td><td class="l" style="background:#ffb9b9"><a style="letter-spacing:0.24px">Sandra Bender</a></td><td class="l" style="background:#ffb9b9"><a>Vet B F</a></td><td style="background:#ffb9b9"><a>OBC</a></td><td style="background:#ffb9b9">17:31</td><td style="background:#ffb9b9">34.25</td><td style="background:#ffb9b9">4</td></tr>
<tr style="height:17px"><td class="sm" style="background:#ffb9b9"><svg width="15" height="15" viewBox="0 0 15 15" style="display:block;margin:0 auto 0 5px"><circle cx="7.5" cy="7.5" r="6.9" fill="url(#sg)" stroke="#45433a" stroke-width="1.1"/><path d="M4.2 2.4Q7 .9 10 2.2" stroke="#fffde0" stroke-width="1" fill="none" opacity=".9"/><g shape-rendering="crispEdges"><rect x="5" y="4" width="1" height="2" fill="#0c0c0c"/><rect x="9" y="4" width="1" height="2" fill="#0c0c0c"/><rect x="2" y="6" width="1" height="1" fill="#0c0c0c"/><rect x="12" y="6" width="1" height="1" fill="#0c0c0c"/><rect x="2" y="7" width="11" height="1" fill="#0c0c0c"/><rect x="3" y="8" width="1" height="1" fill="#0c0c0c"/><rect x="11" y="8" width="1" height="1" fill="#0c0c0c"/><rect x="4" y="8" width="7" height="1" fill="#fff"/><rect x="3" y="9" width="1" height="1" fill="#0c0c0c"/><rect x="11" y="9" width="1" height="1" fill="#0c0c0c"/><rect x="4" y="9" width="7" height="1" fill="#fff"/><rect x="4" y="10" width="1" height="1" fill="#0c0c0c"/><rect x="10" y="10" width="1" height="1" fill="#0c0c0c"/><rect x="5" y="10" width="5" height="1" fill="#fff"/><rect x="5" y="11" width="5" height="1" fill="#0c0c0c"/></g></svg></td><td style="background:#ffb9b9"><a>10</a></td><td class="l" style="background:#ffb9b9"><a style="letter-spacing:0.1px">Lisa Hébert</a></td><td class="l" style="background:#ffb9b9"><a>Vet B F</a></td><td style="background:#ffb9b9"><a>OBC</a></td><td style="background:#ffb9b9">17:51</td><td style="background:#ffb9b9">33.61</td><td style="background:#ffb9b9">5</td></tr>
<tr style="height:17px"><td class="sm" style="background:#ffaaaa"><svg width="15" height="15" viewBox="0 0 15 15" style="display:block;margin:0 auto 0 5px"><circle cx="7.5" cy="7.5" r="6.9" fill="url(#sg)" stroke="#45433a" stroke-width="1.1"/><path d="M4.2 2.4Q7 .9 10 2.2" stroke="#fffde0" stroke-width="1" fill="none" opacity=".9"/><g shape-rendering="crispEdges"><rect x="2" y="5" width="5" height="1" fill="#0c0c0c"/><rect x="8" y="5" width="5" height="1" fill="#0c0c0c"/><rect x="7" y="5" width="1" height="1" fill="#4a4000"/><rect x="2" y="6" width="5" height="1" fill="#0c0c0c"/><rect x="8" y="6" width="5" height="1" fill="#0c0c0c"/><rect x="5" y="6" width="1" height="1" fill="#fff"/><rect x="11" y="6" width="1" height="1" fill="#fff"/><rect x="3" y="7" width="3" height="1" fill="#0c0c0c"/><rect x="9" y="7" width="3" height="1" fill="#0c0c0c"/><rect x="4" y="10" width="1" height="1" fill="#0c0c0c"/><rect x="10" y="10" width="1" height="1" fill="#0c0c0c"/><rect x="5" y="11" width="5" height="1" fill="#0c0c0c"/></g></svg></td><td style="background:#ffaaaa"><a>11</a></td><td class="l" style="background:#ffaaaa"><a style="letter-spacing:0.2px">Sophie Beraud</a></td><td class="l" style="background:#ffaaaa"><a>Senior F</a></td><td style="background:#ffaaaa"><a>OBC</a></td><td style="background:#ffaaaa">18:17</td><td style="background:#ffaaaa">32.82</td><td style="background:#ffaaaa">1</td></tr>
<tr style="height:17px"><td class="sm" style="background:#ffb9b9"><svg width="15" height="15" viewBox="0 0 15 15" style="display:block;margin:0 auto 0 5px"><circle cx="7.5" cy="7.5" r="6.9" fill="url(#sg)" stroke="#45433a" stroke-width="1.1"/><path d="M4.2 2.4Q7 .9 10 2.2" stroke="#fffde0" stroke-width="1" fill="none" opacity=".9"/><g shape-rendering="crispEdges"><rect x="2" y="5" width="5" height="1" fill="#0c0c0c"/><rect x="8" y="5" width="5" height="1" fill="#0c0c0c"/><rect x="7" y="5" width="1" height="1" fill="#4a4000"/><rect x="2" y="6" width="5" height="1" fill="#0c0c0c"/><rect x="8" y="6" width="5" height="1" fill="#0c0c0c"/><rect x="5" y="6" width="1" height="1" fill="#fff"/><rect x="11" y="6" width="1" height="1" fill="#fff"/><rect x="3" y="7" width="3" height="1" fill="#0c0c0c"/><rect x="9" y="7" width="3" height="1" fill="#0c0c0c"/><rect x="4" y="10" width="1" height="1" fill="#0c0c0c"/><rect x="10" y="10" width="1" height="1" fill="#0c0c0c"/><rect x="5" y="11" width="5" height="1" fill="#0c0c0c"/></g></svg></td><td style="background:#ffb9b9"><a>12</a></td><td class="l" style="background:#ffb9b9"><a style="letter-spacing:-0.08px">Lisa Meyer</a></td><td class="l" style="background:#ffb9b9"><a>Vet B F</a></td><td style="background:#ffb9b9"><a>OBC</a></td><td style="background:#ffb9b9">18:22</td><td style="background:#ffb9b9">32.67</td><td style="background:#ffb9b9">6</td></tr>
<tr style="height:17px"><td class="sm" style="background:#ffb9b9"></td><td style="background:#ffb9b9"><a>12</a></td><td class="l" style="background:#ffb9b9"><a style="letter-spacing:-0.08px">Lisa Meyer</a></td><td class="l" style="background:#ffb9b9"><a>Vet B F</a></td><td style="background:#ffb9b9"><a>OBC</a></td><td style="background:#ffb9b9">18:22</td><td style="background:#ffb9b9">32.67</td><td style="background:#ffb9b9">6</td></tr>
<tr style="height:17px"><td class="sm" style="background:#ffb9b9"><svg width="15" height="15" viewBox="0 0 15 15" style="display:block;margin:0 auto 0 5px"><circle cx="7.5" cy="7.5" r="6.9" fill="url(#sg)" stroke="#45433a" stroke-width="1.1"/><path d="M4.2 2.4Q7 .9 10 2.2" stroke="#fffde0" stroke-width="1" fill="none" opacity=".9"/><g shape-rendering="crispEdges"><rect x="2" y="5" width="5" height="1" fill="#0c0c0c"/><rect x="8" y="5" width="5" height="1" fill="#0c0c0c"/><rect x="7" y="5" width="1" height="1" fill="#4a4000"/><rect x="2" y="6" width="5" height="1" fill="#0c0c0c"/><rect x="8" y="6" width="5" height="1" fill="#0c0c0c"/><rect x="5" y="6" width="1" height="1" fill="#fff"/><rect x="11" y="6" width="1" height="1" fill="#fff"/><rect x="3" y="7" width="3" height="1" fill="#0c0c0c"/><rect x="9" y="7" width="3" height="1" fill="#0c0c0c"/><rect x="4" y="10" width="1" height="1" fill="#0c0c0c"/><rect x="10" y="10" width="1" height="1" fill="#0c0c0c"/><rect x="5" y="11" width="5" height="1" fill="#0c0c0c"/></g></svg></td><td style="background:#ffb9b9"><a>14</a></td><td class="l" style="background:#ffb9b9"><a style="letter-spacing:0.15px">Shiree Nowoselski</a></td><td class="l" style="background:#ffb9b9"><a>Vet B F</a></td><td style="background:#ffb9b9"><a>OBC</a></td><td style="background:#ffb9b9">18:34</td><td style="background:#ffb9b9">32.32</td><td style="background:#ffb9b9">8</td></tr>
<tr style="height:17px"><td class="sm" style="background:#ffb9b9"><svg width="15" height="15" viewBox="0 0 15 15" style="display:block;margin:0 auto 0 5px"><circle cx="7.5" cy="7.5" r="6.9" fill="url(#sg)" stroke="#45433a" stroke-width="1.1"/><path d="M4.2 2.4Q7 .9 10 2.2" stroke="#fffde0" stroke-width="1" fill="none" opacity=".9"/><g shape-rendering="crispEdges"><rect x="2" y="5" width="5" height="1" fill="#0c0c0c"/><rect x="8" y="5" width="5" height="1" fill="#0c0c0c"/><rect x="7" y="5" width="1" height="1" fill="#4a4000"/><rect x="2" y="6" width="5" height="1" fill="#0c0c0c"/><rect x="8" y="6" width="5" height="1" fill="#0c0c0c"/><rect x="5" y="6" width="1" height="1" fill="#fff"/><rect x="11" y="6" width="1" height="1" fill="#fff"/><rect x="3" y="7" width="3" height="1" fill="#0c0c0c"/><rect x="9" y="7" width="3" height="1" fill="#0c0c0c"/><rect x="4" y="10" width="1" height="1" fill="#0c0c0c"/><rect x="10" y="10" width="1" height="1" fill="#0c0c0c"/><rect x="5" y="11" width="5" height="1" fill="#0c0c0c"/></g></svg></td><td style="background:#ffb9b9"><a>15</a></td><td class="l" style="background:#ffb9b9"><a style="letter-spacing:0px">Doris Julien</a></td><td class="l" style="background:#ffb9b9"><a>Vet B F</a></td><td style="background:#ffb9b9"><a>OBC</a></td><td style="background:#ffb9b9">18:35</td><td style="background:#ffb9b9">32.29</td><td style="background:#ffb9b9">9</td></tr>
<tr style="height:17px"><td class="sm" style="background:#ffc8c8"><svg width="15" height="15" viewBox="0 0 15 15" style="display:block;margin:0 auto 0 5px"><circle cx="7.5" cy="7.5" r="6.9" fill="url(#sg)" stroke="#45433a" stroke-width="1.1"/><path d="M4.2 2.4Q7 .9 10 2.2" stroke="#fffde0" stroke-width="1" fill="none" opacity=".9"/><g shape-rendering="crispEdges"><rect x="5" y="4" width="1" height="2" fill="#0c0c0c"/><rect x="9" y="4" width="1" height="2" fill="#0c0c0c"/><rect x="2" y="6" width="1" height="1" fill="#0c0c0c"/><rect x="12" y="6" width="1" height="1" fill="#0c0c0c"/><rect x="2" y="7" width="11" height="1" fill="#0c0c0c"/><rect x="3" y="8" width="1" height="1" fill="#0c0c0c"/><rect x="11" y="8" width="1" height="1" fill="#0c0c0c"/><rect x="4" y="8" width="7" height="1" fill="#fff"/><rect x="3" y="9" width="1" height="1" fill="#0c0c0c"/><rect x="11" y="9" width="1" height="1" fill="#0c0c0c"/><rect x="4" y="9" width="7" height="1" fill="#fff"/><rect x="4" y="10" width="1" height="1" fill="#0c0c0c"/><rect x="10" y="10" width="1" height="1" fill="#0c0c0c"/><rect x="5" y="10" width="5" height="1" fill="#fff"/><rect x="5" y="11" width="5" height="1" fill="#0c0c0c"/></g></svg></td><td style="background:#ffc8c8"><a>16</a></td><td class="l" style="background:#ffc8c8"><a style="letter-spacing:0.11px">Barbara Wilson</a></td><td class="l" style="background:#ffc8c8"><a>Vet D F</a></td><td style="background:#ffc8c8"><a>OBC</a></td><td style="background:#ffc8c8">19:40</td><td style="background:#ffc8c8">30.51</td><td style="background:#ffc8c8">1</td></tr>
<tr style="height:17px"><td class="sm" style="background:#ffaeae"><svg width="15" height="15" viewBox="0 0 15 15" style="display:block;margin:0 auto 0 5px"><circle cx="7.5" cy="7.5" r="6.9" fill="url(#sg)" stroke="#45433a" stroke-width="1.1"/><path d="M4.2 2.4Q7 .9 10 2.2" stroke="#fffde0" stroke-width="1" fill="none" opacity=".9"/><g shape-rendering="crispEdges"><rect x="2" y="5" width="5" height="1" fill="#0c0c0c"/><rect x="8" y="5" width="5" height="1" fill="#0c0c0c"/><rect x="7" y="5" width="1" height="1" fill="#4a4000"/><rect x="2" y="6" width="5" height="1" fill="#0c0c0c"/><rect x="8" y="6" width="5" height="1" fill="#0c0c0c"/><rect x="5" y="6" width="1" height="1" fill="#fff"/><rect x="11" y="6" width="1" height="1" fill="#fff"/><rect x="3" y="7" width="3" height="1" fill="#0c0c0c"/><rect x="9" y="7" width="3" height="1" fill="#0c0c0c"/><rect x="4" y="10" width="1" height="1" fill="#0c0c0c"/><rect x="10" y="10" width="1" height="1" fill="#0c0c0c"/><rect x="5" y="11" width="5" height="1" fill="#0c0c0c"/></g></svg></td><td style="background:#ffaeae"><a>17</a></td><td class="l" style="background:#ffaeae"><a style="letter-spacing:0.07px">Caroline Delisle</a></td><td class="l" style="background:#ffaeae"><a>Vet A F</a></td><td style="background:#ffaeae"><a>OBC</a></td><td style="background:#ffaeae">19:58</td><td style="background:#ffaeae">30.05</td><td style="background:#ffaeae">3</td></tr>
<tr style="height:17px"><td class="sm" style="background:#ffc8c8"></td><td style="background:#ffc8c8"><a>18</a></td><td class="l" style="background:#ffc8c8"><a style="letter-spacing:0.15px">Jean Cooper</a></td><td class="l" style="background:#ffc8c8"><a>Vet D F</a></td><td style="background:#ffc8c8"><a>OBC</a></td><td style="background:#ffc8c8">20:38</td><td style="background:#ffc8c8">29.08</td><td style="background:#ffc8c8">2</td></tr>
</table>
<div class="a" style="left:861px;width:201px;text-align:right;top:808px;font-size:9.85px;line-height:12px;-webkit-text-stroke:.2px #000">Last Modified: 8-May-2007</div>
</div>
<div id="vscroll">
<div class="a" style="left:1px;top:1px;width:13px;height:13px;background:linear-gradient(90deg,#fbfaf8,#ebe6e0)"></div>
<svg class="a" style="left:4px;top:5px" width="7" height="5" viewBox="0 0 7 5"><path d="M0 4.6H7L3.5 .4Z" fill="#000"/></svg>
<div class="a" style="left:1px;top:15px;width:13px;height:133px;background:linear-gradient(90deg,#c7bcb0,#cdc3b8)"></div>
<div class="a" style="left:1px;top:149px;width:13px;height:653px;background:linear-gradient(90deg,#fdfcfb,#efeae5 50%,#e2d9d1)"></div>
<div class="a" style="left:1px;top:149px;width:13px;height:5px;background:linear-gradient(90deg,#fefefd,#f4f1ed)"></div>
<div class="a" style="left:1px;top:154px;width:13px;height:1px;background:#cfc9c2"></div>
<div class="a" style="left:1px;top:796px;width:13px;height:1px;background:#cfc9c2"></div>
<div class="a" style="left:1px;top:797px;width:13px;height:5px;background:linear-gradient(90deg,#fefefd,#f4f1ed)"></div>
<div class="a" style="left:1px;top:803px;width:13px;height:8px;background:linear-gradient(90deg,#c7bcb0,#cdc3b8)"></div>
<svg class="a" style="left:4px;top:467px" width="9" height="18" viewBox="0 0 9 18"><rect x="0" y="0" width="1" height="1" fill="#b5b1ac"/><rect x="1" y="1" width="1" height="1" fill="#fff"/><rect x="3" y="0" width="1" height="1" fill="#b5b1ac"/><rect x="4" y="1" width="1" height="1" fill="#fff"/><rect x="6" y="0" width="1" height="1" fill="#b5b1ac"/><rect x="7" y="1" width="1" height="1" fill="#fff"/><rect x="0" y="3" width="1" height="1" fill="#b5b1ac"/><rect x="1" y="4" width="1" height="1" fill="#fff"/><rect x="3" y="3" width="1" height="1" fill="#b5b1ac"/><rect x="4" y="4" width="1" height="1" fill="#fff"/><rect x="6" y="3" width="1" height="1" fill="#b5b1ac"/><rect x="7" y="4" width="1" height="1" fill="#fff"/><rect x="0" y="6" width="1" height="1" fill="#b5b1ac"/><rect x="1" y="7" width="1" height="1" fill="#fff"/><rect x="3" y="6" width="1" height="1" fill="#b5b1ac"/><rect x="4" y="7" width="1" height="1" fill="#fff"/><rect x="6" y="6" width="1" height="1" fill="#b5b1ac"/><rect x="7" y="7" width="1" height="1" fill="#fff"/><rect x="0" y="9" width="1" height="1" fill="#b5b1ac"/><rect x="1" y="10" width="1" height="1" fill="#fff"/><rect x="3" y="9" width="1" height="1" fill="#b5b1ac"/><rect x="4" y="10" width="1" height="1" fill="#fff"/><rect x="6" y="9" width="1" height="1" fill="#b5b1ac"/><rect x="7" y="10" width="1" height="1" fill="#fff"/><rect x="0" y="12" width="1" height="1" fill="#b5b1ac"/><rect x="1" y="13" width="1" height="1" fill="#fff"/><rect x="3" y="12" width="1" height="1" fill="#b5b1ac"/><rect x="4" y="13" width="1" height="1" fill="#fff"/><rect x="6" y="12" width="1" height="1" fill="#b5b1ac"/><rect x="7" y="13" width="1" height="1" fill="#fff"/><rect x="0" y="15" width="1" height="1" fill="#b5b1ac"/><rect x="1" y="16" width="1" height="1" fill="#fff"/><rect x="3" y="15" width="1" height="1" fill="#b5b1ac"/><rect x="4" y="16" width="1" height="1" fill="#fff"/><rect x="6" y="15" width="1" height="1" fill="#b5b1ac"/><rect x="7" y="16" width="1" height="1" fill="#fff"/></svg>
<div class="a" style="left:1px;top:812px;width:13px;height:13px;background:linear-gradient(90deg,#fbfaf8,#ebe6e0)"></div>
<svg class="a" style="left:4px;top:816px" width="7" height="5" viewBox="0 0 7 5"><path d="M0 .4H7L3.5 4.6Z" fill="#000"/></svg>
</div>
<div id="statusbar"><div class="a" style="left:7px;top:4px;font-size:13px;letter-spacing:-.3px;line-height:16px">Done</div></div>
<div id="panel">
<svg class="a" style="left:8px;top:1px" width="24" height="24" viewBox="0 0 24 24"><path d="M7.80 16.72A6.5 6.5 0 0 1 7.80 6.48" fill="none" stroke="#f59208" stroke-width="3.6"/><path d="M9.37 5.57A6.5 6.5 0 0 1 18.24 10.70" fill="none" stroke="#ea5a16" stroke-width="3.6"/><path d="M18.24 12.50A6.5 6.5 0 0 1 9.37 17.63" fill="none" stroke="#d41a1a" stroke-width="3.6"/><circle cx="1.40" cy="11.60" r="2.7" fill="#efebe7"/><circle cx="1.40" cy="11.60" r="2" fill="#f2600e"/><circle cx="17.00" cy="2.59" r="2.7" fill="#efebe7"/><circle cx="17.00" cy="2.59" r="2" fill="#d8102a"/><circle cx="17.00" cy="20.61" r="2.7" fill="#efebe7"/><circle cx="17.00" cy="20.61" r="2" fill="#f29410"/></svg>
<div class="a" style="left:34px;top:5px;font-size:13px;letter-spacing:-.3px;line-height:16px">Applications</div>
<div class="a" style="left:125px;top:5px;font-size:13px;letter-spacing:-.3px;line-height:16px">Places</div>
<div class="a" style="left:180px;top:5px;font-size:13px;letter-spacing:-.16px;line-height:16px">System</div>
<svg class="a" style="left:237px;top:4px" width="21" height="19" viewBox="0 0 21 19"><rect x=".6" y=".6" width="19.8" height="16.8" rx="1.8" fill="#4e504c" stroke="#1c1c1c" stroke-width="1"/><rect x="2.4" y="2.4" width="16.2" height="11.2" fill="#333533"/><path d="M2.4 4.5H18.6M2.4 7H18.6M2.4 9.5H18.6M2.4 12H18.6" stroke="#484a48" stroke-width=".8"/><path d="M5 5.6L7.8 7.8L5 10M8.8 10.4H12" stroke="#fff" stroke-width="1.1" fill="none"/><rect x="2.4" y="14.6" width="2.4" height="1.2" fill="#7fe040"/><rect x="13" y="14.8" width="5.4" height=".9" fill="#2a2a2a"/><path d="M1.6 18.2H19.4" stroke="#8a8884" stroke-width="1" opacity=".6"/></svg>
<svg class="a" style="left:258px;top:2px;opacity:1" width="21" height="21" viewBox="0 0 16 16"><circle cx="8" cy="8.2" r="7.4" fill="url(#ffo)"/><path d="M10.4 1.4Q15.6 3.6 15.4 9Q15 13 11 15Q13.2 12 13 8.4Q12.8 4.4 10.4 1.4Z" fill="url(#ffy)"/><circle cx="9" cy="7.2" r="4.9" fill="url(#ffb)"/><path d="M.8 6.4Q1.4 3.4 3.6 2.2Q3.4 3.6 4.2 4.8Q5.6 4.2 7.4 5.2L6.6 6.2L7.4 6.8Q6.2 7.6 6.6 8.8Q7.6 10.4 10.6 9.6Q12 9.2 12.4 8Q13 10.6 11 12.4Q8 14.4 4.6 13Q1 11 .8 6.4Z" fill="url(#ffo)"/><path d="M2.6 3.2Q4.4 1.6 6.4 1.6Q5 2.6 4.2 4.8Q3.2 4.2 2.6 3.2Z" fill="#1c4ea8"/><path d="M6.4 10.6Q8.6 11.6 11.2 10.2Q9.8 12 7.8 11.8Q6.8 11.4 6.4 10.6Z" fill="#0a2a78"/></svg>
<svg class="a" style="left:279px;top:2px" width="21" height="21" viewBox="0 0 21 21"><path d="M1.2 7.6L9.2 .8H11.4L19.6 7.6V19.6H1.2Z" fill="#f6f6f4" stroke="#a8a6a2" stroke-width="1"/><path d="M3.4 7.8Q10.4 5.8 17.4 7.8L14.4 12.4H6.4Z" fill="#dcdcda"/><path d="M1.6 8.4L8.4 13.2H12.4L19.2 8.4" fill="none" stroke="#bdbbb7" stroke-width=".9"/><path d="M2 19L8 13.4M18.8 19L12.8 13.4" stroke="#c4c2be" stroke-width=".9"/></svg>
<svg class="a" style="left:302px;top:4px" width="19" height="19" viewBox="0 0 19 19"><defs><radialGradient id="gh" cx="40%" cy="25%" r="80%"><stop offset="0" stop-color="#5a88cc"/><stop offset=".5" stop-color="#2c5aa6"/><stop offset="1" stop-color="#1c4088"/></radialGradient></defs><circle cx="9.5" cy="9.5" r="8.6" fill="url(#gh)"/><text x="9.6" y="14.4" text-anchor="middle" font-family="DejaVu Sans,Liberation Sans,sans-serif" font-weight="bold" font-size="13.5" fill="#fff">?</text></svg>
<div class="a" style="left:1001px;top:5px;font-size:13px;letter-spacing:-.34px;line-height:16px">Celia McInnis</div>
<svg class="a" style="left:1090px;top:5px" width="24" height="16" viewBox="0 0 24 16"><circle cx="5.6" cy="8" r="4.4" fill="none" stroke="#e0902a" stroke-width="2"/><circle cx="11" cy="8" r="4.4" fill="none" stroke="#e0902a" stroke-width="2"/><path d="M14 4.5H18V1.5L23.4 8L18 14.5V11.5H14Z" fill="#f6b040" stroke="#c87818" stroke-width="1"/></svg>
<div class="a" style="left:1118px;top:4px;width:4px;height:19px;background:repeating-linear-gradient(#efebe7 0,#efebe7 1px,#c2bdb5 1px,#c2bdb5 2px);opacity:.7"></div>
<svg class="a" style="left:1128px;top:6px" width="18" height="14" viewBox="0 0 18 14"><defs><linearGradient id="gm" x1="0" y1="0" x2="0" y2="1"><stop offset="0" stop-color="#fff"/><stop offset="1" stop-color="#d8d8d8"/></linearGradient></defs><rect x=".8" y=".8" width="16.4" height="12.4" rx="1.6" fill="url(#gm)" stroke="#4a4a4a" stroke-width="1.4"/><path d="M1.6 1.8L9 8.4L16.4 1.8M1.6 12.4L6.8 6.6M16.4 12.4L11.2 6.6" fill="none" stroke="#8a8a8a" stroke-width=".9"/></svg>
<svg class="a" style="left:1150px;top:4px" width="19" height="19" viewBox="0 0 19 19"><rect x=".5" y=".5" width="18" height="18" rx="2" fill="#f07818" stroke="#c85a08"/><path d="M9.5 2V17M2 9.5H17M4.2 4.2L14.8 14.8M14.8 4.2L4.2 14.8" stroke="#ffe8c8" stroke-width="1.6"/><circle cx="9.5" cy="9.5" r="2.6" fill="#fff"/></svg>
<div class="a" style="left:1169px;top:7px;width:5px;height:17px;background:#e8d890"></div>
<div class="a" style="left:1171px;top:8px;width:2px;height:1px;background:#333"></div><div class="a" style="left:1172px;top:17px;width:1px;height:5px;background:#222"></div>
<svg class="a" style="left:1182px;top:3px" width="18" height="19" viewBox="0 0 18 19"><rect x="4.6" y=".8" width="11.6" height="8.6" fill="#e6e6e2" stroke="#777" stroke-width=".9"/><rect x="6" y="2.2" width="8.8" height="5.8" fill="#0a0a0a"/><rect x="1.2" y="5.2" width="12.6" height="9.4" fill="#e0e0dc" stroke="#666" stroke-width=".9"/><rect x="2.6" y="6.6" width="9.8" height="6.4" fill="#050505"/><path d="M6 15.4H9.4V16.6H12V18H3.4V16.6H6Z" fill="#222"/><rect x="14.2" y="11.6" width="1.4" height="1.4" fill="#333"/></svg>
<svg class="a" style="left:1207px;top:5px" width="18" height="16" viewBox="0 0 18 16"><path d="M1 5.5H4.5L9 1.5V14.5L4.5 10.5H1Z" fill="#aaa" stroke="#333" stroke-width="1"/><path d="M11 4V12M13.5 2.5V13.5M16 4.5V11.5" stroke="#444" stroke-width="1.2"/></svg>
<div class="a" style="left:1229px;top:5px;font-size:13px;letter-spacing:-.3px;line-height:16px">Thu 22 May, 12:26 AM</div>
<svg class="a" style="left:1379px;top:2px" width="20" height="20" viewBox="0 0 20 20"><defs><linearGradient id="gp" x1="0" y1="0" x2="0" y2="1"><stop offset="0" stop-color="#e83a3a"/><stop offset=".5" stop-color="#d01010"/><stop offset="1" stop-color="#c00808"/></linearGradient></defs><rect x=".5" y=".5" width="19" height="19" rx="2.2" fill="url(#gp)" stroke="#a00808"/><path d="M6.6 5.4A6 6 0 1 0 13.4 5.4" fill="none" stroke="#fff" stroke-width="3" stroke-linecap="butt"/><path d="M10 2.6V10" stroke="#fff" stroke-width="2.8" stroke-linecap="butt"/></svg>
</div>
<div id="taskbar">
<div class="a" style="left:0;top:2px;width:23px;height:22px;border:1px solid #8a857d;border-radius:3px;background:linear-gradient(#f6f4f1,#e3dfd9)"></div>
<svg class="a" style="left:4px;top:6px" width="15" height="14" viewBox="0 0 15 14"><rect x=".6" y=".6" width="13.8" height="12.8" fill="#fff" stroke="#222" stroke-width="1.2"/><rect x="2.4" y="2.6" width="10.2" height="8.2" fill="#8a3a20"/><rect x="4" y="4" width="5" height="4" fill="#e8c8b0"/></svg>
<div class="a" style="left:26px;top:4px;width:6px;height:19px;background-image:radial-gradient(#c9c4bc 0.8px,transparent 1px);background-size:3px 3px"></div>
<div class="a" style="left:35px;top:2px;width:126px;height:22px;border:1px solid #8f8a82;border-radius:3px;background:linear-gradient(#f8f6f3,#e6e2dc)"></div>
<svg class="a" style="left:41px;top:5px" width="16" height="16" viewBox="0 0 16 16"><rect x=".5" y="1" width="15" height="13" rx="1.5" fill="#c8c6c2" stroke="#8e8b86"/><rect x="2.5" y="3" width="11" height="8" fill="#8f8d89"/></svg>
<div class="a" style="left:66.8px;top:6px;font-size:13px;letter-spacing:-.2px;line-height:16px;font-weight:normal">[celia@celi...</div>
<div class="a" style="left:164px;top:2px;width:126px;height:22px;border:1px solid #8f8a82;border-radius:3px;background:linear-gradient(#f8f6f3,#e6e2dc)"></div>
<svg class="a" style="left:170px;top:5px" width="16" height="16" viewBox="0 0 16 16"><rect x=".5" y="1" width="15" height="13" rx="1.5" fill="#c8c6c2" stroke="#8e8b86"/><rect x="2.5" y="3" width="11" height="8" fill="#8f8d89"/></svg>
<div class="a" style="left:195.2px;top:6px;font-size:13px;letter-spacing:-.2px;line-height:16px;font-weight:normal">[celia@celia...</div>
<div class="a" style="left:292px;top:2px;width:126px;height:22px;border:1px solid #8f8a82;border-radius:3px;background:linear-gradient(#f8f6f3,#e6e2dc)"></div>
<svg class="a" style="left:298px;top:7px;opacity:0.8" width="16" height="12" viewBox="0 0 16 12"><rect x=".6" y=".6" width="14.8" height="10.8" fill="#fafafa" stroke="#8a8a8a"/><path d="M1 1L8 7L15 1" fill="none" stroke="#8a8a8a"/></svg>
<div class="a" style="left:323.7px;top:6px;font-size:13px;letter-spacing:-.2px;line-height:16px;font-weight:normal">[INBOX (34...</div>
<div class="a" style="left:421px;top:2px;width:126px;height:22px;border:1px solid #7f7a72;border-radius:3px;background:linear-gradient(#cfcac3,#dad6cf)"></div>
<svg class="a" style="left:427px;top:5px;opacity:1" width="17" height="17" viewBox="0 0 16 16"><circle cx="8" cy="8.2" r="7.4" fill="url(#ffo)"/><path d="M10.4 1.4Q15.6 3.6 15.4 9Q15 13 11 15Q13.2 12 13 8.4Q12.8 4.4 10.4 1.4Z" fill="url(#ffy)"/><circle cx="9" cy="7.2" r="4.9" fill="url(#ffb)"/><path d="M.8 6.4Q1.4 3.4 3.6 2.2Q3.4 3.6 4.2 4.8Q5.6 4.2 7.4 5.2L6.6 6.2L7.4 6.8Q6.2 7.6 6.6 8.8Q7.6 10.4 10.6 9.6Q12 9.2 12.4 8Q13 10.6 11 12.4Q8 14.4 4.6 13Q1 11 .8 6.4Z" fill="url(#ffo)"/><path d="M2.6 3.2Q4.4 1.6 6.4 1.6Q5 2.6 4.2 4.8Q3.2 4.2 2.6 3.2Z" fill="#1c4ea8"/><path d="M6.4 10.6Q8.6 11.6 11.2 10.2Q9.8 12 7.8 11.8Q6.8 11.4 6.4 10.6Z" fill="#0a2a78"/></svg>
<div class="a" style="left:452.1px;top:6px;font-size:13px;letter-spacing:-.2px;line-height:16px;font-weight:normal">OBC Wome...</div>
<div class="a" style="left:549px;top:2px;width:126px;height:22px;border:1px solid #8f8a82;border-radius:3px;background:linear-gradient(#f8f6f3,#e6e2dc)"></div>
<svg class="a" style="left:555px;top:5px;opacity:0.6" width="17" height="17" viewBox="0 0 16 16"><circle cx="8" cy="8.2" r="7.4" fill="url(#ffo)"/><path d="M10.4 1.4Q15.6 3.6 15.4 9Q15 13 11 15Q13.2 12 13 8.4Q12.8 4.4 10.4 1.4Z" fill="url(#ffy)"/><circle cx="9" cy="7.2" r="4.9" fill="url(#ffb)"/><path d="M.8 6.4Q1.4 3.4 3.6 2.2Q3.4 3.6 4.2 4.8Q5.6 4.2 7.4 5.2L6.6 6.2L7.4 6.8Q6.2 7.6 6.6 8.8Q7.6 10.4 10.6 9.6Q12 9.2 12.4 8Q13 10.6 11 12.4Q8 14.4 4.6 13Q1 11 .8 6.4Z" fill="url(#ffo)"/><path d="M2.6 3.2Q4.4 1.6 6.4 1.6Q5 2.6 4.2 4.8Q3.2 4.2 2.6 3.2Z" fill="#1c4ea8"/><path d="M6.4 10.6Q8.6 11.6 11.2 10.2Q9.8 12 7.8 11.8Q6.8 11.4 6.4 10.6Z" fill="#0a2a78"/></svg>
<div class="a" style="left:580.6px;top:6px;font-size:13px;letter-spacing:-.2px;line-height:16px;font-weight:normal">[Seniors et ...</div>
<div class="a" style="left:678px;top:2px;width:126px;height:22px;border:1px solid #c07a3a;border-radius:3px;background:linear-gradient(#f6c89a,#eeb47c)"></div>
<svg class="a" style="left:684px;top:5px;opacity:0.75" width="17" height="17" viewBox="0 0 16 16"><circle cx="8" cy="8.2" r="7.4" fill="url(#ffo)"/><path d="M10.4 1.4Q15.6 3.6 15.4 9Q15 13 11 15Q13.2 12 13 8.4Q12.8 4.4 10.4 1.4Z" fill="url(#ffy)"/><circle cx="9" cy="7.2" r="4.9" fill="url(#ffb)"/><path d="M.8 6.4Q1.4 3.4 3.6 2.2Q3.4 3.6 4.2 4.8Q5.6 4.2 7.4 5.2L6.6 6.2L7.4 6.8Q6.2 7.6 6.6 8.8Q7.6 10.4 10.6 9.6Q12 9.2 12.4 8Q13 10.6 11 12.4Q8 14.4 4.6 13Q1 11 .8 6.4Z" fill="url(#ffo)"/><path d="M2.6 3.2Q4.4 1.6 6.4 1.6Q5 2.6 4.2 4.8Q3.2 4.2 2.6 3.2Z" fill="#1c4ea8"/><path d="M6.4 10.6Q8.6 11.6 11.2 10.2Q9.8 12 7.8 11.8Q6.8 11.4 6.4 10.6Z" fill="#0a2a78"/></svg>
<div class="a" style="left:709.0px;top:6px;font-size:13px;letter-spacing:-.2px;line-height:16px;font-weight:bold">[phpMyA...</div>
<div class="a" style="left:806px;top:2px;width:126px;height:22px;border:1px solid #8f8a82;border-radius:3px;background:linear-gradient(#f8f6f3,#e6e2dc)"></div>
<svg class="a" style="left:812px;top:5px;opacity:0.6" width="17" height="17" viewBox="0 0 16 16"><circle cx="8" cy="8.2" r="7.4" fill="url(#ffo)"/><path d="M10.4 1.4Q15.6 3.6 15.4 9Q15 13 11 15Q13.2 12 13 8.4Q12.8 4.4 10.4 1.4Z" fill="url(#ffy)"/><circle cx="9" cy="7.2" r="4.9" fill="url(#ffb)"/><path d="M.8 6.4Q1.4 3.4 3.6 2.2Q3.4 3.6 4.2 4.8Q5.6 4.2 7.4 5.2L6.6 6.2L7.4 6.8Q6.2 7.6 6.6 8.8Q7.6 10.4 10.6 9.6Q12 9.2 12.4 8Q13 10.6 11 12.4Q8 14.4 4.6 13Q1 11 .8 6.4Z" fill="url(#ffo)"/><path d="M2.6 3.2Q4.4 1.6 6.4 1.6Q5 2.6 4.2 4.8Q3.2 4.2 2.6 3.2Z" fill="#1c4ea8"/><path d="M6.4 10.6Q8.6 11.6 11.2 10.2Q9.8 12 7.8 11.8Q6.8 11.4 6.4 10.6Z" fill="#0a2a78"/></svg>
<div class="a" style="left:837.5px;top:6px;font-size:13px;letter-spacing:-.2px;line-height:16px;font-weight:normal">[TT Query A...</div>
<div class="a" style="left:934px;top:2px;width:126px;height:22px;border:1px solid #8f8a82;border-radius:3px;background:linear-gradient(#f8f6f3,#e6e2dc)"></div>
<svg class="a" style="left:940px;top:5px;opacity:0.6" width="17" height="17" viewBox="0 0 16 16"><circle cx="8" cy="8.2" r="7.4" fill="url(#ffo)"/><path d="M10.4 1.4Q15.6 3.6 15.4 9Q15 13 11 15Q13.2 12 13 8.4Q12.8 4.4 10.4 1.4Z" fill="url(#ffy)"/><circle cx="9" cy="7.2" r="4.9" fill="url(#ffb)"/><path d="M.8 6.4Q1.4 3.4 3.6 2.2Q3.4 3.6 4.2 4.8Q5.6 4.2 7.4 5.2L6.6 6.2L7.4 6.8Q6.2 7.6 6.6 8.8Q7.6 10.4 10.6 9.6Q12 9.2 12.4 8Q13 10.6 11 12.4Q8 14.4 4.6 13Q1 11 .8 6.4Z" fill="url(#ffo)"/><path d="M2.6 3.2Q4.4 1.6 6.4 1.6Q5 2.6 4.2 4.8Q3.2 4.2 2.6 3.2Z" fill="#1c4ea8"/><path d="M6.4 10.6Q8.6 11.6 11.2 10.2Q9.8 12 7.8 11.8Q6.8 11.4 6.4 10.6Z" fill="#0a2a78"/></svg>
<div class="a" style="left:965.9px;top:6px;font-size:13px;letter-spacing:-.2px;line-height:16px;font-weight:normal">[www.drmat...</div>
<div class="a" style="left:1063px;top:2px;width:126px;height:22px;border:1px solid #8f8a82;border-radius:3px;background:linear-gradient(#f8f6f3,#e6e2dc)"></div>
<svg class="a" style="left:1069px;top:5px;opacity:0.6" width="17" height="17" viewBox="0 0 16 16"><circle cx="8" cy="8.2" r="7.4" fill="url(#ffo)"/><path d="M10.4 1.4Q15.6 3.6 15.4 9Q15 13 11 15Q13.2 12 13 8.4Q12.8 4.4 10.4 1.4Z" fill="url(#ffy)"/><circle cx="9" cy="7.2" r="4.9" fill="url(#ffb)"/><path d="M.8 6.4Q1.4 3.4 3.6 2.2Q3.4 3.6 4.2 4.8Q5.6 4.2 7.4 5.2L6.6 6.2L7.4 6.8Q6.2 7.6 6.6 8.8Q7.6 10.4 10.6 9.6Q12 9.2 12.4 8Q13 10.6 11 12.4Q8 14.4 4.6 13Q1 11 .8 6.4Z" fill="url(#ffo)"/><path d="M2.6 3.2Q4.4 1.6 6.4 1.6Q5 2.6 4.2 4.8Q3.2 4.2 2.6 3.2Z" fill="#1c4ea8"/><path d="M6.4 10.6Q8.6 11.6 11.2 10.2Q9.8 12 7.8 11.8Q6.8 11.4 6.4 10.6Z" fill="#0a2a78"/></svg>
<div class="a" style="left:1094.4px;top:6px;font-size:13px;letter-spacing:-.2px;line-height:16px;font-weight:normal">[2008-Jun-0...</div>
<div class="a" style="left:1191px;top:2px;width:126px;height:22px;border:1px solid #8f8a82;border-radius:3px;background:linear-gradient(#f8f6f3,#e6e2dc)"></div>
<svg class="a" style="left:1197px;top:7px;opacity:0.55" width="16" height="12" viewBox="0 0 16 12"><rect x=".6" y=".6" width="14.8" height="10.8" fill="#fafafa" stroke="#8a8a8a"/><path d="M1 1L8 7L15 1" fill="none" stroke="#8a8a8a"/></svg>
<div class="a" style="left:1222.8px;top:6px;font-size:13px;letter-spacing:-.2px;line-height:16px;font-weight:normal">[15k Time T...</div>
<div class="a" style="left:1322px;top:2px;width:55px;height:22px;background:#afa598;border-bottom:1px solid #8a8074"></div>
<div class="a" style="left:1323px;top:2px;width:26px;height:21px;border:1px solid #f6e4d2;background:#f09a5c"></div>
<svg class="a" style="left:1327px;top:4px;opacity:1" width="18" height="18" viewBox="0 0 16 16"><circle cx="8" cy="8.2" r="7.4" fill="url(#ffo)"/><path d="M10.4 1.4Q15.6 3.6 15.4 9Q15 13 11 15Q13.2 12 13 8.4Q12.8 4.4 10.4 1.4Z" fill="url(#ffy)"/><circle cx="9" cy="7.2" r="4.9" fill="url(#ffb)"/><path d="M.8 6.4Q1.4 3.4 3.6 2.2Q3.4 3.6 4.2 4.8Q5.6 4.2 7.4 5.2L6.6 6.2L7.4 6.8Q6.2 7.6 6.6 8.8Q7.6 10.4 10.6 9.6Q12 9.2 12.4 8Q13 10.6 11 12.4Q8 14.4 4.6 13Q1 11 .8 6.4Z" fill="url(#ffo)"/><path d="M2.6 3.2Q4.4 1.6 6.4 1.6Q5 2.6 4.2 4.8Q3.2 4.2 2.6 3.2Z" fill="#1c4ea8"/><path d="M6.4 10.6Q8.6 11.6 11.2 10.2Q9.8 12 7.8 11.8Q6.8 11.4 6.4 10.6Z" fill="#0a2a78"/></svg>
<svg class="a" style="left:1380px;top:3px" width="19" height="21" viewBox="0 0 19 21"><path d="M2.4 5H16.6L15.4 20H3.6Z" fill="#f07a1c" stroke="#d05e08" stroke-width=".9"/><path d="M1 1.8Q1 .8 2 .8H17Q18 .8 18 1.8V5.2H1Z" fill="#f8a060" stroke="#e07828" stroke-width=".8"/><circle cx="9.5" cy="12.6" r="3" fill="none" stroke="#fbd2b0" stroke-width="1.3" stroke-dasharray="2.2 1"/></svg>
</div>
</body></html>
